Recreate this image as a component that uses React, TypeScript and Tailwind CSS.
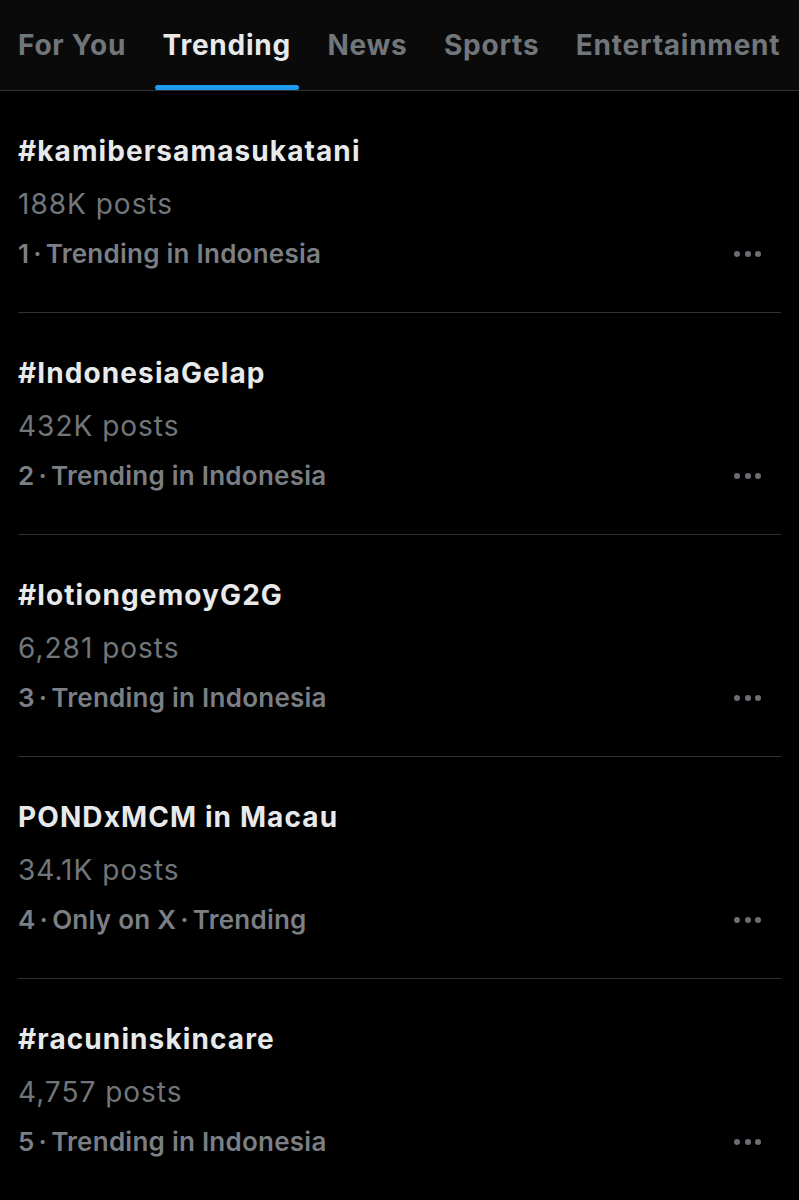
const tabs = ['For You', 'Trending', 'News', 'Sports', 'Entertainment'];

type Trend = {
	title: string;
	posts: string;
	meta: string[];
};

const trends: Trend[] = [
	{ title: '#kamibersamasukatani', posts: '188K posts', meta: ['1', 'Trending in Indonesia'] },
	{ title: '#IndonesiaGelap', posts: '432K posts', meta: ['2', 'Trending in Indonesia'] },
	{ title: '#lotiongemoyG2G', posts: '6,281 posts', meta: ['3', 'Trending in Indonesia'] },
	{ title: 'PONDxMCM in Macau', posts: '34.1K posts', meta: ['4', 'Only on X', 'Trending'] },
	{ title: '#racuninskincare', posts: '4,757 posts', meta: ['5', 'Trending in Indonesia'] },
];

function Dots() {
	return (
		<span className="flex flex-row gap-[4.5px] mr-[20px]">
			<span className="w-[6px] h-[6px] rounded-full bg-[#6b6e72]" />
			<span className="w-[6px] h-[6px] rounded-full bg-[#6b6e72]" />
			<span className="w-[6px] h-[6px] rounded-full bg-[#6b6e72]" />
		</span>
	);
}

export default function App() {
	return (
		<div
			className="w-[799px] h-[1200px] bg-black overflow-hidden"
			style={{ fontFamily: 'Inter, "Noto Sans", sans-serif' }}>
			<div className="flex flex-row h-[91px] bg-[#0a0a0a] border-b border-[#2f3336] pl-[18px] gap-[36.5px]">
				{tabs.map((tab) => {
					const active = tab === 'Trending';
					return (
						<div key={tab} className="relative flex items-center">
							<span
								className={`text-[28px] tracking-[0.75px] font-bold ${active ? 'text-[#e7e9ea]' : 'text-[#71767b]'}`}>
								{tab}
							</span>
							{active && (
								<span className="absolute -left-[8px] -right-[8px] bottom-0 h-[5px] rounded-full bg-[#1d9bf0]" />
							)}
						</div>
					);
				})}
			</div>
			{trends.map((t) => (
				<div key={t.title} className="mx-[18px] border-b border-[#2f3336] pt-[42px] pb-[40px]">
					<div className="text-[28px] tracking-[1.1px] leading-[36px] font-bold text-[#e7e9ea]">
						{t.title}
					</div>
					<div className="mt-[17px] text-[28px] tracking-[1px] leading-[36px] text-[#71767b]">
						{t.posts}
					</div>
					<div className="mt-[14px] flex justify-between items-center">
						<span className="text-[26px] tracking-[0.25px] leading-[36px] font-semibold text-[#7b7f84]">
							{t.meta.map((part, i) => (
								<span key={part}>
									{i > 0 && <span className="mx-[4px]">·</span>}
									{part}
								</span>
							))}
						</span>
						<Dots />
					</div>
				</div>
			))}
		</div>
	);
}
